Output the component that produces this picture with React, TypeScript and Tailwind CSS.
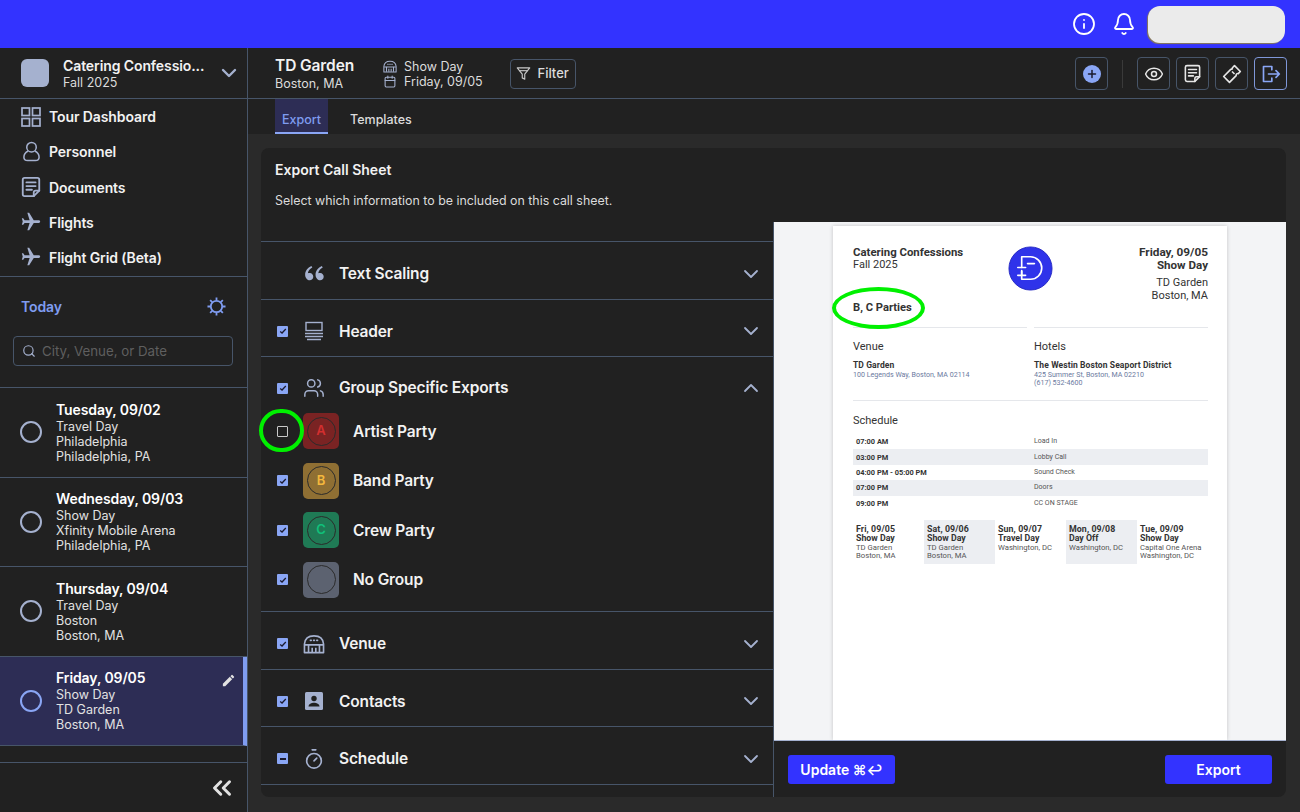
import React from "react";
import { Info, Bell, ChevronDown, ChevronUp, Search, ChevronsLeft, Eye, Plus, Calendar, Users, Timer } from "lucide-react";
import { RiDoubleQuotesL } from "react-icons/ri";
import { MdEdit, MdFlight } from "react-icons/md";

const Doc = ({ className = "" }: { className?: string }) => (
  <svg viewBox="0 0 24 24" className={className} fill="none" stroke="currentColor" strokeWidth="2" strokeLinejoin="round" strokeLinecap="round">
    <path d="M15 22H5a2 2 0 0 1-2-2V4a2 2 0 0 1 2-2h14a2 2 0 0 1 2 2v12z" />
    <path d="M7 7h10M7 11h10M7 15h6" />
    <path d="M21 16h-4a2 2 0 0 0-2 2v4" />
  </svg>
);
const Arena = ({ className = "" }: { className?: string }) => (
  <svg viewBox="0 0 24 22" className={className} fill="none" stroke="currentColor" strokeWidth="1.8" strokeLinejoin="round">
    <path d="M1.500 20.500V11C2 5 6 2 12 2s10 3 10.500 9v9.500z" />
    <path d="M2 12h4M18 12h4" />
    <path d="M6 20v-8h12v8M10 20v-5M14 20v-5" />
    <path d="M8 7h1M11.500 7h1M15 7h1" strokeLinecap="round" />
  </svg>
);
const Ticket = ({ className = "" }: { className?: string }) => (
  <svg viewBox="0 0 24 24" className={className} fill="none" stroke="currentColor" strokeWidth="2" strokeLinejoin="round">
    <path d="M15 2l7 7-2.500 2.500a2 2 0 0 0-2.500 2.500L9 22l-7-7 8.500-8.500a2 2 0 0 0 2-2z" />
    <path d="M12 9l3 3" />
  </svg>
);
const ExportIcon = ({ className = "" }: { className?: string }) => (
  <svg viewBox="0 0 24 24" className={className} fill="none" stroke="currentColor" strokeWidth="2" strokeLinejoin="round" strokeLinecap="round">
    <path d="M13 7V3H3v18h10v-4" />
    <path d="M9 12h13M18 8l4 4-4 4" />
  </svg>
);
const Funnel = ({ className = "" }: { className?: string }) => (
  <svg viewBox="0 0 24 24" className={className} fill="none" stroke="currentColor" strokeWidth="1.8" strokeLinejoin="round">
    <path d="M2 3h20l-8 10v8l-4-2v-6z" />
    <path d="M5 7.500h14" />
  </svg>
);
const HeaderIcon = ({ className = "" }: { className?: string }) => (
  <svg viewBox="0 0 20 20" className={className} fill="none" stroke="currentColor" strokeWidth="1.4">
    <rect x="2" y="1.500" width="16" height="8" />
    <path d="M1 12.500h18M1 15.500h18M3 18.500h14" />
  </svg>
);
const ContactIcon = ({ className = "" }: { className?: string }) => (
  <svg viewBox="0 0 20 20" className={className}>
    <rect x="1" y="1" width="18" height="18" rx="1.500" fill="currentColor" />
    <circle cx="10" cy="7.500" r="2.700" fill="#212121" />
    <path d="M4.500 15.500c0-2.600 3-3.800 5.500-3.800s5.500 1.200 5.500 3.800z" fill="#212121" />
  </svg>
);
const GridIcon = ({ className = "" }: { className?: string }) => (
  <svg viewBox="0 0 20 20" className={className} fill="none" stroke="currentColor" strokeWidth="1.700">
    <rect x="1" y="1" width="7.500" height="7.500" />
    <rect x="11.500" y="1" width="7.500" height="7.500" />
    <rect x="1" y="11.500" width="7.500" height="7.500" />
    <rect x="11.500" y="11.500" width="7.500" height="7.500" />
  </svg>
);
const PersonIcon = ({ className = "" }: { className?: string }) => (
  <svg viewBox="0 0 20 22" className={className} fill="none" stroke="currentColor" strokeWidth="1.600" strokeLinejoin="round">
    <circle cx="10" cy="6.500" r="5" />
    <path d="M6.500 10.500C3.500 12 2 14.500 2 17c0 2.500 2 3.500 4 3.500h8c2 0 4-1 4-3.500 0-2.500-1.500-5-4.500-6.500" />
  </svg>
);
const SunIcon = ({ className = "" }: { className?: string }) => (
  <svg viewBox="0 0 20 20" className={className} fill="none" stroke="currentColor" strokeWidth="1.900">
    <circle cx="10" cy="10" r="6" />
    <path d="M10 .5v3M10 16.500v3M.5 10h3M16.500 10h3M3.300 3.300l2.200 2.200M14.500 14.500l2.200 2.200M3.300 16.700l2.200-2.200M14.500 5.500l2.200-2.200" />
  </svg>
);
const Logo = () => (
  <svg viewBox="0 0 46 46" className="h-[45px] w-[45px]">
    <circle cx="23" cy="23" r="22" fill="#2f33ea" stroke="#2529c4" strokeWidth="1" />
    <g fill="none" stroke="#ffffff" strokeWidth="1.700" strokeLinecap="round" strokeLinejoin="round">
      <path d="M14 22V11h9a11.500 11.500 0 0 1 0 23h-9v-9" />
      <path d="M20 18h7M10 22h8M10 30h8M14 30v-4" />
    </g>
  </svg>
);

const nav = [
  { label: "Tour Dashboard", icon: <GridIcon className="h-[20px] w-[20px]" /> },
  { label: "Personnel", icon: <PersonIcon className="h-[21px] w-[19px]" /> },
  { label: "Documents", icon: <Doc className="h-[22px] w-[22px]" /> },
  { label: "Flights", icon: <MdFlight className="h-[24px] w-[24px] rotate-90" /> },
  { label: "Flight Grid (Beta)", icon: <MdFlight className="h-[24px] w-[24px] rotate-90" /> },
];

const days = [
  { t: "Tuesday, 09/02", a: "Travel Day", b: "Philadelphia", c: "Philadelphia, PA" },
  { t: "Wednesday, 09/03", a: "Show Day", b: "Xfinity Mobile Arena", c: "Philadelphia, PA" },
  { t: "Thursday, 09/04", a: "Travel Day", b: "Boston", c: "Boston, MA" },
];

const DayText = ({ d }: { d: { t: string; a: string; b: string; c: string } }) => (
  <div className="flex flex-col">
    <div className="text-[14px] font-semibold leading-[18px] tracking-[-0.1px] text-white">{d.t}</div>
    <div className="text-[12.5px] leading-[15px] text-[#e2e2e2]">{d.a}</div>
    <div className="text-[12.5px] leading-[15px] text-[#e2e2e2]">{d.b}</div>
    <div className="text-[12.5px] leading-[15px] text-[#e2e2e2]">{d.c}</div>
  </div>
);

const Check = ({ state = "on" }: { state?: "on" | "off" | "mixed" }) =>
  state === "off" ? (
    <div className="h-[11px] w-[11px] rounded-[1px] border border-[#c9c9c9]" />
  ) : (
    <div className="flex h-[11px] w-[11px] items-center justify-center rounded-[1px] bg-[#8aa6f5]">
      {state === "on" ? (
        <svg viewBox="0 0 10 10" className="h-[8px] w-[8px]" fill="none" stroke="#1a1a2e" strokeWidth="1.600">
          <path d="M1.500 5.500l2.300 2 4.700-5" />
        </svg>
      ) : (
        <div className="h-[1.5px] w-[6px] bg-[#1a1a2e]" />
      )}
    </div>
  );

const Section = ({ icon, label, state }: { icon: React.ReactNode; label: string; state?: "on" | "mixed" }) => (
  <div className="flex h-[57.5px] shrink-0 items-center border-b border-[#475569] pl-[15px] pr-[10px] pt-[7px]">
    <div className="flex w-[13px] justify-center">{state && <Check state={state} />}</div>
    <div className="ml-[15px] flex w-[20px] justify-center text-[#a5b1cf]">{icon}</div>
    <div className="ml-[15px] flex-1 text-[15.5px] font-semibold tracking-[-0.15px] text-[#f2f2f2]">{label}</div>
    <ChevronDown className="h-6 w-6 text-[#a5b1cf]" strokeWidth={1.8} />
  </div>
);

const Party = ({ letter, bg, fg, label, state = "on" }: { letter: string; bg: string; fg: string; label: string; state?: "on" | "off" }) => (
  <div className="flex h-[36px] items-center pl-[15px]">
    <div className="flex w-[13px] justify-center">
      <Check state={state} />
    </div>
    <div className={`ml-[14px] flex h-[36px] w-[36px] items-center justify-center rounded-[5px] ${bg}`}>
      <div className={`flex h-[29px] w-[29px] items-center justify-center rounded-full border border-[#2b2b2b] text-[13px] font-semibold ${fg}`}>{letter}</div>
    </div>
    <div className="ml-[14px] pt-[1px] text-[15.5px] font-semibold tracking-[-0.15px] text-[#f2f2f2]">{label}</div>
  </div>
);

const schedule = [
  ["07:00 AM", "Load In"],
  ["03:00 PM", "Lobby Call"],
  ["04:00 PM - 05:00 PM", "Sound Check"],
  ["07:00 PM", "Doors"],
  ["09:00 PM", "CC ON STAGE"],
];
const upcoming = [
  ["Fri, 09/05", "Show Day", "TD Garden", "Boston, MA"],
  ["Sat, 09/06", "Show Day", "TD Garden", "Boston, MA"],
  ["Sun, 09/07", "Travel Day", "Washington, DC", ""],
  ["Mon, 09/08", "Day Off", "Washington, DC", ""],
  ["Tue, 09/09", "Show Day", "Capital One Arena", "Washington, DC"],
];

const ToolBtn = ({ children, active }: { children: React.ReactNode; active?: boolean }) => (
  <div className={`flex h-[33px] w-[33px] items-center justify-center rounded-[4px] border ${active ? "border-[#7f97d8] text-[#8aa6f5]" : "border-[#475569] text-[#e6e6e6]"}`}>
    {children}
  </div>
);

export default function App() {
  return (
    <div className="relative flex h-[812px] w-[1300px] flex-col overflow-hidden bg-[#2a2a2a] font-['Inter',sans-serif]">
      <div className="flex h-[48px] shrink-0 items-center justify-end bg-[#3333ff] pr-[15px]">
        <Info className="h-[24px] w-[24px] text-white" strokeWidth={1.8} />
        <Bell className="ml-[16px] h-[24px] w-[24px] text-white" strokeWidth={1.8} />
        <div className="ml-[12px] h-[37px] w-[137px] rounded-xl bg-[#ebebeb] shadow-[-1px_1px_1px_#8a7a55]" />
      </div>

      <div className="flex min-h-0 flex-1">
        {/* Sidebar */}
        <aside className="flex w-[248px] shrink-0 flex-col border-r border-[#475569] bg-[#212121]">
          <div className="flex h-[51px] shrink-0 items-center border-b border-[#475569] pl-[21px] pr-[6px]">
            <div className="h-[28px] w-[28px] rounded-[6px] bg-[#a5b1cf]" />
            <div className="ml-[14px] flex-1">
              <div className="text-[14px] font-semibold leading-[18px] tracking-[-0.1px] text-[#f2f2f2]">Catering Confessio...</div>
              <div className="text-[12.5px] leading-[15px] text-[#dcdcdc]">Fall 2025</div>
            </div>
            <ChevronDown className="h-[24px] w-[24px] text-[#a5b1cf]" strokeWidth={2.4} />
          </div>
          <div className="flex h-[178px] shrink-0 flex-col justify-center border-b border-[#475569] pb-[1px] pl-[20px]">
            {nav.map((n) => (
              <div key={n.label} className="flex h-[35.5px] items-center">
                <div className="flex w-[22px] justify-center text-[#a5b1cf]">{n.icon}</div>
                <div className="ml-[7px] text-[14px] font-semibold tracking-[-0.1px] text-[#f2f2f2]">{n.label}</div>
              </div>
            ))}
          </div>
          <div className="flex h-[111px] shrink-0 flex-col border-b border-[#475569]">
            <div className="flex items-center justify-between pl-[21px] pr-[21px] pt-[20px]">
              <div className="text-[14px] font-semibold leading-[18px] tracking-[-0.1px] text-[#7f9cf0]">Today</div>
              <SunIcon className="h-[19px] w-[19px] text-[#7f9cf0]" />
            </div>
            <div className="ml-[13px] mr-[14px] mt-[20px] flex h-[30px] items-center rounded-[4px] border border-[#475569] px-[8px]">
              <Search className="h-[14px] w-[14px] text-[#a5b1cf]" />
              <span className="ml-[6px] pt-[1px] text-[13.3px] text-[#5f5f5f]">City, Venue, or Date</span>
            </div>
          </div>
          {days.map((d) => (
            <div key={d.t} className="flex h-[89.5px] shrink-0 items-center border-b border-[#475569] pl-[20px]">
              <div className="h-[22px] w-[22px] rounded-full border-2 border-[#a5b1cf]" />
              <div className="ml-[14px]"><DayText d={d} /></div>
            </div>
          ))}
          <div className="flex h-[89.5px] shrink-0 items-center border-b border-r-4 border-[#475569] border-r-[#7f9cf0] bg-[#2d2d55] pl-[20px]">
            <div className="h-[22px] w-[22px] rounded-full border-2 border-[#8aa6f5]" />
            <div className="ml-[14px] flex-1"><DayText d={{ t: "Friday, 09/05", a: "Show Day", b: "TD Garden", c: "Boston, MA" }} /></div>
            <MdEdit className="mb-[40px] mr-[7px] h-[15px] w-[15px] text-[#e2e2e2]" />
          </div>
          <div className="h-[17px] shrink-0 border-b border-[#475569]" />
          <div className="flex flex-1 items-center justify-end pr-[10px]">
            <ChevronsLeft className="h-[30px] w-[30px] text-[#e2e2e2]" strokeWidth={2.4} />
          </div>
        </aside>

        {/* Main */}
        <div className="flex min-w-0 flex-1 flex-col">
          <div className="flex h-[51px] shrink-0 items-center border-b border-[#475569] bg-[#212121] pl-[27px] pr-[13px] pt-[1px]">
            <div className="w-[108px]">
              <div className="text-[15.5px] font-semibold leading-[20px] tracking-[-0.1px] text-[#f2f2f2]">TD Garden</div>
              <div className="text-[12.5px] leading-[15px] text-[#dcdcdc]">Boston, MA</div>
            </div>
            <div className="flex flex-col text-[12.5px] leading-[15px] text-[#dcdcdc]">
              <div className="flex items-center"><Arena className="h-[13px] w-[14px] text-[#a5b1cf]" /><span className="ml-[7px]">Show Day</span></div>
              <div className="flex items-center"><Calendar className="h-[13px] w-[14px] text-[#a5b1cf]" /><span className="ml-[7px]">Friday, 09/05</span></div>
            </div>
            <div className="ml-[27px] flex h-[30px] w-[66px] items-center justify-center rounded-[4px] border border-[#475569] text-[13px] font-medium text-[#dcdcdc]">
              <Funnel className="h-[15px] w-[15px] text-[#c9c9c9]" />
              <span className="ml-[6px]">Filter</span>
            </div>
            <div className="flex-1" />
            <ToolBtn>
              <div className="flex h-[18px] w-[18px] items-center justify-center rounded-full bg-[#8aa6f5]"><Plus className="h-[12px] w-[12px] text-[#1a1a2e]" strokeWidth={3} /></div>
            </ToolBtn>
            <div className="mx-[14px] h-[28px] w-px bg-[#3a3a3a]" />
            <div className="flex gap-[6px]">
              <ToolBtn><Eye className="h-[20px] w-[20px]" strokeWidth={1.8} /></ToolBtn>
              <ToolBtn><Doc className="h-[19px] w-[19px]" /></ToolBtn>
              <ToolBtn><Ticket className="h-[20px] w-[20px]" /></ToolBtn>
              <ToolBtn active><ExportIcon className="h-[20px] w-[20px]" /></ToolBtn>
            </div>
          </div>

          <div className="flex h-[35px] shrink-0 items-stretch bg-[#212121] pl-[27px] text-[12.5px] font-medium">
            <div className="flex w-[53px] items-center justify-center border-b-2 border-[#8aa6f5] bg-[#2d2d55] pt-[9px] text-[#7f9cf0]">Export</div>
            <div className="ml-[22px] flex items-center pt-[7px] text-[#dcdcdc]">Templates</div>
          </div>

          <div className="min-h-0 flex-1 pb-[15px] pl-[13px] pr-[14px] pt-[14px]">
            <div className="flex h-full flex-col overflow-hidden rounded-lg bg-[#212121]">
              <div className="h-[74px] shrink-0 pl-[14px] pt-[13px]">
                <div className="text-[14px] font-semibold leading-[18px] text-[#f2f2f2]">Export Call Sheet</div>
                <div className="mt-[14px] text-[12.4px] leading-[15px] text-[#dcdcdc]">Select which information to be included on this call sheet.</div>
              </div>
              <div className="flex min-h-0 flex-1">
                <div className="flex w-[513px] shrink-0 flex-col border-r border-[#475569] pt-[19px]">
                  <div className="flex flex-col border-t border-[#475569]">
                    <Section icon={<RiDoubleQuotesL className="h-[25px] w-[25px] shrink-0" />} label="Text Scaling" />
                    <Section icon={<HeaderIcon className="h-[20px] w-[20px]" />} label="Header" state="on" />
                    <div className="flex h-[255px] shrink-0 flex-col border-b border-[#475569]">
                      <div className="flex h-[56px] shrink-0 items-center pl-[15px] pr-[10px] pt-[6px]">
                        <div className="flex w-[13px] justify-center"><Check /></div>
                        <div className="ml-[15px] flex w-[20px] justify-center text-[#a5b1cf]"><Users className="h-[22px] w-[22px] shrink-0" strokeWidth={1.6} /></div>
                        <div className="ml-[15px] flex-1 text-[15.5px] font-semibold tracking-[-0.15px] text-[#f2f2f2]">Group Specific Exports</div>
                        <ChevronUp className="h-6 w-6 text-[#a5b1cf]" strokeWidth={1.8} />
                      </div>
                      <div className="flex flex-col gap-[13.5px]">
                        <Party letter="A" bg="bg-[#7a2323]" fg="text-[#d32f2f]" label="Artist Party" state="off" />
                        <Party letter="B" bg="bg-[#8f6f33]" fg="text-[#f5b83d]" label="Band Party" />
                        <Party letter="C" bg="bg-[#1f7a55]" fg="text-[#10c07a]" label="Crew Party" />
                        <Party letter="" bg="bg-[#5c6270]" fg="text-white" label="No Group" />
                      </div>
                    </div>
                    <Section icon={<Arena className="h-[20px] w-[22px] shrink-0" />} label="Venue" state="on" />
                    <Section icon={<ContactIcon className="h-[20px] w-[20px]" />} label="Contacts" state="on" />
                    <Section icon={<Timer className="h-[22px] w-[22px] shrink-0" strokeWidth={1.8} />} label="Schedule" state="mixed" />
                  </div>
                </div>

                <div className="flex min-w-0 flex-1 flex-col">
                  <div className="flex h-[519px] shrink-0 justify-center overflow-hidden border-b border-[#a5b1cf] bg-[#f3f4f6] pt-[4px]">
                    <div className="w-[394px] bg-white pl-[20px] pr-[19px] pt-[20px] font-['Roboto',sans-serif] text-[#333333] shadow-[0_0_4px_rgba(0,0,0,0.2)]">
                      <div className="flex justify-between">
                        <div className="w-[130px]">
                          <div className="text-[11.4px] font-bold leading-[12.5px]">Catering Confessions</div>
                          <div className="text-[11px] leading-[12.5px]">Fall 2025</div>
                        </div>
                        <Logo />
                        <div className="w-[130px] text-right">
                          <div className="text-[11.8px] font-bold leading-[12.5px]">Friday, 09/05</div>
                          <div className="text-[11.6px] font-bold leading-[12.5px]">Show Day</div>
                          <div className="mt-[6px] text-[11px] leading-[12.5px]">TD Garden</div>
                          <div className="text-[11px] leading-[12.5px]">Boston, MA</div>
                        </div>
                      </div>
                      <div className="text-[11.2px] font-bold leading-[12.5px]">B, C Parties</div>
                      <div className="mt-[12px] flex gap-[7px]">
                        <div className="flex-1 border-t border-[#e5e7eb] pt-[12px]">
                          <div className="text-[11px] leading-[14px]">Venue</div>
                          <div className="mt-[7px] text-[8.5px] font-bold leading-[9px] tracking-[0.1px]">TD Garden</div>
                          <div className="text-[7.1px] leading-[9px] text-[#6b7aa0]">100 Legends Way, Boston, MA 02114</div>
                        </div>
                        <div className="flex-1 border-t border-[#e5e7eb] pt-[12px]">
                          <div className="text-[11px] leading-[14px]">Hotels</div>
                          <div className="mt-[7px] whitespace-nowrap text-[8.5px] font-bold leading-[9px] tracking-[0.1px]">The Westin Boston Seaport District</div>
                          <div className="text-[7.1px] leading-[9px] text-[#6b7aa0]">425 Summer St, Boston, MA 02210</div>
                          <div className="text-[7.1px] leading-[8.5px] text-[#6b7aa0]">(617) 532-4600</div>
                        </div>
                      </div>
                      <div className="mt-[13px] border-t border-[#e5e7eb] pt-[13px] text-[11px] leading-[14px]">Schedule</div>
                      <div className="mt-[6px] flex flex-col">
                        {schedule.map((s, i) => (
                          <div key={s[0]} className={`flex h-[15.4px] items-center leading-[9px] ${i % 2 === 1 ? "bg-[#eceef2]" : ""}`}>
                            <div className="w-[181px] pl-[3px] text-[7.4px] font-bold">{s[0]}</div>
                            <div className="text-[7px] text-[#555555]">{s[1]}</div>
                          </div>
                        ))}
                      </div>
                      <div className="mt-[9px] grid grid-cols-5">
                        {upcoming.map((u, i) => (
                          <div key={u[0]} className={`h-[44px] pl-[3px] pt-[5px] ${i % 2 === 1 ? "bg-[#eceef2]" : ""}`}>
                            <div className="text-[8.8px] font-bold leading-[9.5px] tracking-[0.1px]">{u[0]}</div>
                            <div className="text-[8.8px] font-bold leading-[9.5px]">{u[1]}</div>
                            <div className="whitespace-nowrap text-[7.7px] leading-[8.5px] text-[#555555]">{u[2]}</div>
                            <div className="whitespace-nowrap text-[7.7px] leading-[8.5px] text-[#555555]">{u[3]}</div>
                          </div>
                        ))}
                      </div>
                    </div>
                  </div>
                  <div className="flex flex-1 items-start justify-between px-[14px] pt-[14px]">
                    <div className="flex h-[29px] w-[107px] items-center justify-center rounded-[3px] bg-[#3333ff] text-[14px] font-semibold text-white">Update ⌘↩</div>
                    <div className="flex h-[29px] w-[107px] items-center justify-center rounded-[3px] bg-[#3333ff] text-[14px] font-semibold text-white">Export</div>
                  </div>
                </div>
              </div>
            </div>
          </div>
        </div>
      </div>

      {/* Annotation rings drawn over the screenshot */}
      <div className="absolute left-[259px] top-[409px] h-[43px] w-[45px] rounded-full border-4 border-[#00f000]" />
      <div className="absolute left-[832px] top-[287px] h-[42px] w-[93px] rounded-[50%] border-4 border-[#00f000]" />
    </div>
  );
}
